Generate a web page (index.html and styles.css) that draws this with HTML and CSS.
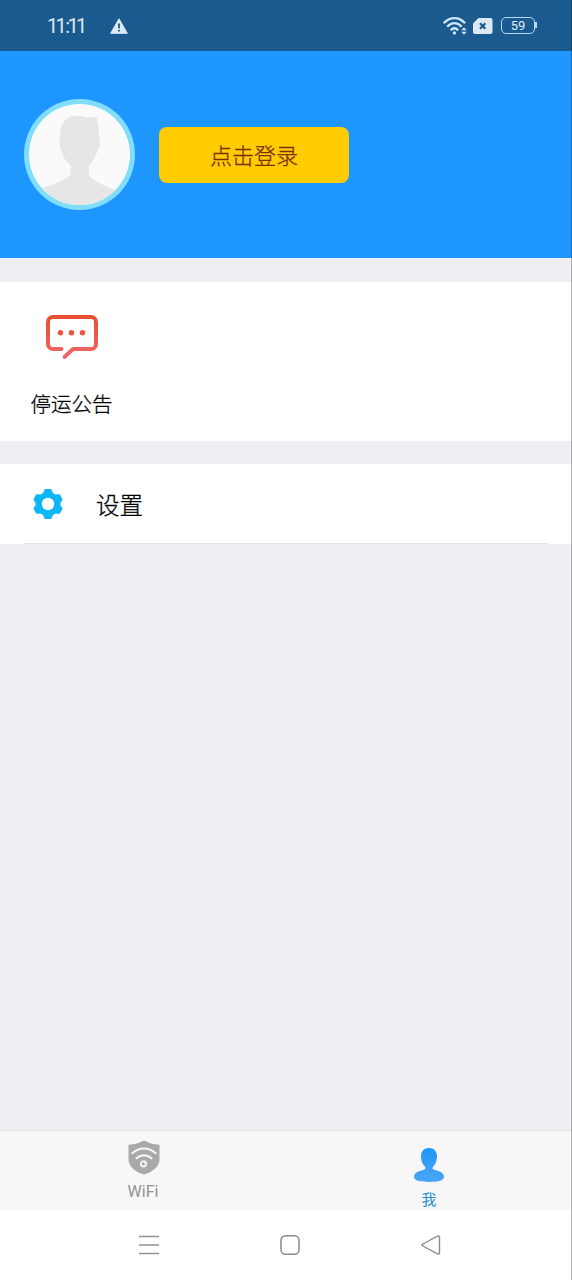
FILE: index.html
```html
<!DOCTYPE html>
<html lang="zh-CN">
<head>
<meta charset="utf-8">
<title>我</title>
<link rel="stylesheet" href="styles.css">
</head>
<body>
<div class="screen">
  <header class="status">
    <span class="time">11<span class="colon">:</span>11</span>
    <svg class="warn" width="18" height="16" viewBox="0 0 18 16"><path d="M9 .8 17.3 15.3H.7Z" fill="#dce9f3" stroke="#dce9f3" stroke-linejoin="round"/><path d="M9 5.5v4.8M9 11.8v1.8" stroke="#1b5a8f" stroke-width="1.8"/></svg>
    <div class="indicators">
      <svg width="24" height="20" viewBox="0 0 24 20" fill="none" stroke="#cfe6f7" stroke-width="2.3"><path d="M.8 7.2C7 .4 16 .4 22 7.2M4.2 10.8c4.4-4.8 10.2-4.8 14.4 0M7.7 14.2c2.4-2.6 5.2-2.6 7.4 0"/><circle cx="11.4" cy="16.9" r="1.7" fill="#cfe6f7" stroke="none"/><path d="M18.4 14.2 21 11.2l2.6 3zM18.4 15.8l2.6 3 2.6-3z" fill="#cfe6f7" stroke="none"/></svg>
      <svg width="20" height="16" viewBox="0 0 20 16"><path d="M5.500 0H17.500a2 2 0 0 1 2 2V14a2 2 0 0 1-2 2H2a2 2 0 0 1-2-2V5.500Z" fill="#dce9f3"/><path d="m7 5.300 5.400 5.400M12.400 5.300 7 10.700" stroke="#1b5a8f" stroke-width="2.200"/></svg>
      <div class="battery">59</div>
    </div>
  </header>
  <section class="profile">
    <svg class="avatar" width="111" height="111" viewBox="0 0 112 112">
      <defs><clipPath id="face"><circle cx="56" cy="56" r="51"/></clipPath></defs>
      <circle cx="56" cy="56" r="56" fill="#82ddfb"/><circle cx="56" cy="56" r="51" fill="#fafafa"/>
      <path clip-path="url(#face)" fill="#e6e6e6" d="M37 35C36 24 44 17 54 17c5 0 8 2 13 2l6-1c2 6 2.500 12 2.500 19 1.500 5 1.500 11-1 14-2 7-5 13-9 16v8c0 6 14 12 28 17v25H12V92c15-5 35-11 35-17v-8c-5-4-8-9-9-15-3-4-3-11-1-17Z"/>
    </svg>
    <button class="login">点击登录</button>
  </section>
  <section class="services">
    <div class="service">
      <svg width="54" height="46" viewBox="0 0 54 46" fill="none">
        <defs><linearGradient id="red" x1="0" y1="0" x2="0" y2="46" gradientUnits="userSpaceOnUse"><stop stop-color="#e84e2c"/><stop offset="1" stop-color="#ef6a70"/></linearGradient></defs>
        <path d="M16.500 35H8a5 5 0 0 1-5-5V8a5 5 0 0 1 5-5H46a5 5 0 0 1 5 5V30a5 5 0 0 1-5 5H28l-8.500 8" stroke="url(#red)" stroke-width="4" stroke-linecap="round" stroke-linejoin="round"/><circle cx="15.500" cy="18.700" r="2.700" fill="#e95542"/><circle cx="26.500" cy="18.700" r="2.700" fill="#e95542"/><circle cx="37.500" cy="18.700" r="2.700" fill="#e95542"/>
      </svg>
      <span class="service-name">停运公告</span>
    </div>
  </section>
  <section class="settings">
    <svg width="32" height="32" viewBox="0 0 32 32"><path fill="#0db7f6" stroke="#0db7f6" stroke-width="2" stroke-linejoin="round" d="M13.500 2H18.500L20.200 5.700 23.500 7.600 27.200 7.200 29.500 11.500 27.500 14.600V17.400L29.500 20.500 27.200 24.800 23.500 24.400 20.200 26.300 18.500 30H13.500L11.800 26.300 8.500 24.400 4.800 24.800 2.500 20.500 4.500 17.400V14.600L2.500 11.500 4.800 7.200 8.500 7.600 11.800 5.700Z"/><circle cx="16" cy="16" r="6.200" fill="#fff"/></svg>
    <span>设置</span>
  </section>
  <main class="blank"></main>
  <nav class="tabs">
    <div class="tab">
      <svg class="shield" width="32" height="35" viewBox="0 0 32 35"><path d="M16 .5C20 2.800 25 4.500 31.500 4.800V19c0 8-7 13-15.500 15.500C7.500 32 .5 27 .5 19V4.800C7 4.500 12 2.800 16 .5Z" fill="#a9a9a9"/><g fill="none" stroke="#f7f7f7" stroke-width="2.100" stroke-linecap="round"><path d="M4.500 13c7-6 16-6 23 0M8.500 18.300c4.500-4 10.500-4 15 0"/><path d="M18 22c-2-1.500-5.200-.6-5.200 1.900 0 2.800 3.700 3.500 5.400 1.300" stroke-width="1.900"/><path d="M16.500 23.700h2.300" stroke-width="1.300"/></g></svg>
      <span>WiFi</span>
    </div>
    <div class="tab active">
      <svg width="30" height="34" viewBox="0 0 30 34"><defs><linearGradient id="blue" x1="0" y1="0" x2="0" y2="1"><stop stop-color="#2196f8"/><stop offset="1" stop-color="#4ba5f7"/></linearGradient></defs><path fill="url(#blue)" d="M15 0c5 0 8 3.500 8 8.200 0 4.500-1.500 8-4 10.500-.8 1.200-.6 2.300.5 2.800C23 23 30 23.500 30 28.800c0 3.500-5 5.200-15 5.200S0 32.300 0 28.800C0 23.500 7 23 10.500 21.500c1.100-.5 1.300-1.600.5-2.800C8.500 16.200 7 12.700 7 8.200 7 3.500 10 0 15 0Z"/></svg>
      <span>我</span>
    </div>
  </nav>
  <footer class="sysnav">
    <svg width="22" height="20" viewBox="0 0 22 20"><path d="M1 1.500h20M1 10h20M1 18.500h20" stroke="#929292" stroke-width="1.500"/></svg>
    <svg width="22" height="20" viewBox="0 0 22 20"><rect x="2" y=".8" width="18" height="18.400" rx="4.500" fill="none" stroke="#8c8c8c" stroke-width="1.500"/></svg>
    <svg width="22" height="20" viewBox="0 0 22 20"><path d="M3 9 17.500 1.200Q19.500.3 19.500 2.500v15q0 2.200-2 1.300L3 11Q1 10 3 9Z" fill="none" stroke="#8c8c8c" stroke-width="1.400"/></svg>
  </footer>
  <div class="edge"></div>
</div>
</body>
</html>
```
FILE: styles.css
```css
* { box-sizing: border-box; }
body { margin: 0; }
svg { display: block; flex: none; }
.screen {
  position: relative;
  display: flex;
  flex-direction: column;
  width: 572px;
  height: 1280px;
  background: #eeeef3;
  color: #000;
  font-family: "Noto Sans", "Noto Sans CJK SC", sans-serif;
}
.status {
  display: flex;
  align-items: center;
  height: 51px;
  padding: 0 35px 0 47px;
  background: #1b5a8f;
  color: #dce9f3;
}
.time { width: 63px; font: 20px/24px Roboto, sans-serif; letter-spacing: -2.800px; padding-top: 1px; }
.colon { margin: 0 .3px 0 1.300px; }
.indicators { display: flex; align-items: center; gap: 7px; margin: 0 1px 0 auto; }
.indicators svg:first-child { margin-right: -1px; }
.battery {
  position: relative;
  width: 34px;
  height: 17px;
  margin: 0 1px 0 1px;
  border: 1.500px solid #b8d9f2;
  border-radius: 5px;
  font: 13px/15px Roboto, sans-serif;
  text-align: center;
}
.battery::after {
  content: "";
  position: absolute;
  top: 4px;
  right: -3px;
  width: 2px;
  height: 6px;
  background: #b8d9f2;
}
.profile {
  display: flex;
  align-items: center;
  gap: 24px;
  height: 207px;
  padding-left: 24px;
  background: #1e96ff;
}
.login {
  width: 190px;
  height: 56px;
  padding: 0 0 2px;
  border: 0;
  border-radius: 8px;
  background: #ffcc00;
  color: #7b3012;
  font: 300 22px/54px "Noto Sans CJK SC", sans-serif;
  -webkit-text-stroke: .3px;
}
.services { height: 159px; margin-top: 24px; padding: 32px 0 0 30px; background: #fff; }
.service { display: flex; flex-direction: column; align-items: center; width: 83px; }
.service-name { margin-top: 28px; font: 300 20.500px/30px "Noto Sans CJK SC", sans-serif; white-space: nowrap; -webkit-text-stroke: .3px; }
.settings {
  display: flex;
  align-items: center;
  gap: 32px;
  height: 80px;
  margin-top: 23px;
  padding-left: 32px;
  background: linear-gradient(#e2e2e5, #e2e2e5) 24px 79px / 524px 1px no-repeat #fff;
  font: 300 23.500px/34px "Noto Sans CJK SC", sans-serif;
  -webkit-text-stroke: .3px;
}
.blank { flex: 1; }
.tabs { display: flex; height: 80px; border-top: 1px solid #e2e2e4; background: #f7f7f7; }
.tab {
  display: flex;
  flex: 1;
  flex-direction: column;
  align-items: center;
  padding-top: 9px;
  color: #929292;
  font: 16px/20px Roboto, "Noto Sans CJK SC", sans-serif;
}
.shield { margin-left: 1px; }
.tab span { margin-top: 7px; }
.tab.active { padding-top: 17px; color: #2690cf; font-size: 15px; }
.tab.active span { margin-top: 8px; }
.sysnav {
  display: flex;
  align-items: center;
  justify-content: space-between;
  height: 70px;
  padding: 0 130px 0 138px;
  background: #fff;
}
.edge { position: absolute; top: 0; right: 0; width: 1px; height: 1280px; background: rgba(0, 0, 0, .27); }
```
